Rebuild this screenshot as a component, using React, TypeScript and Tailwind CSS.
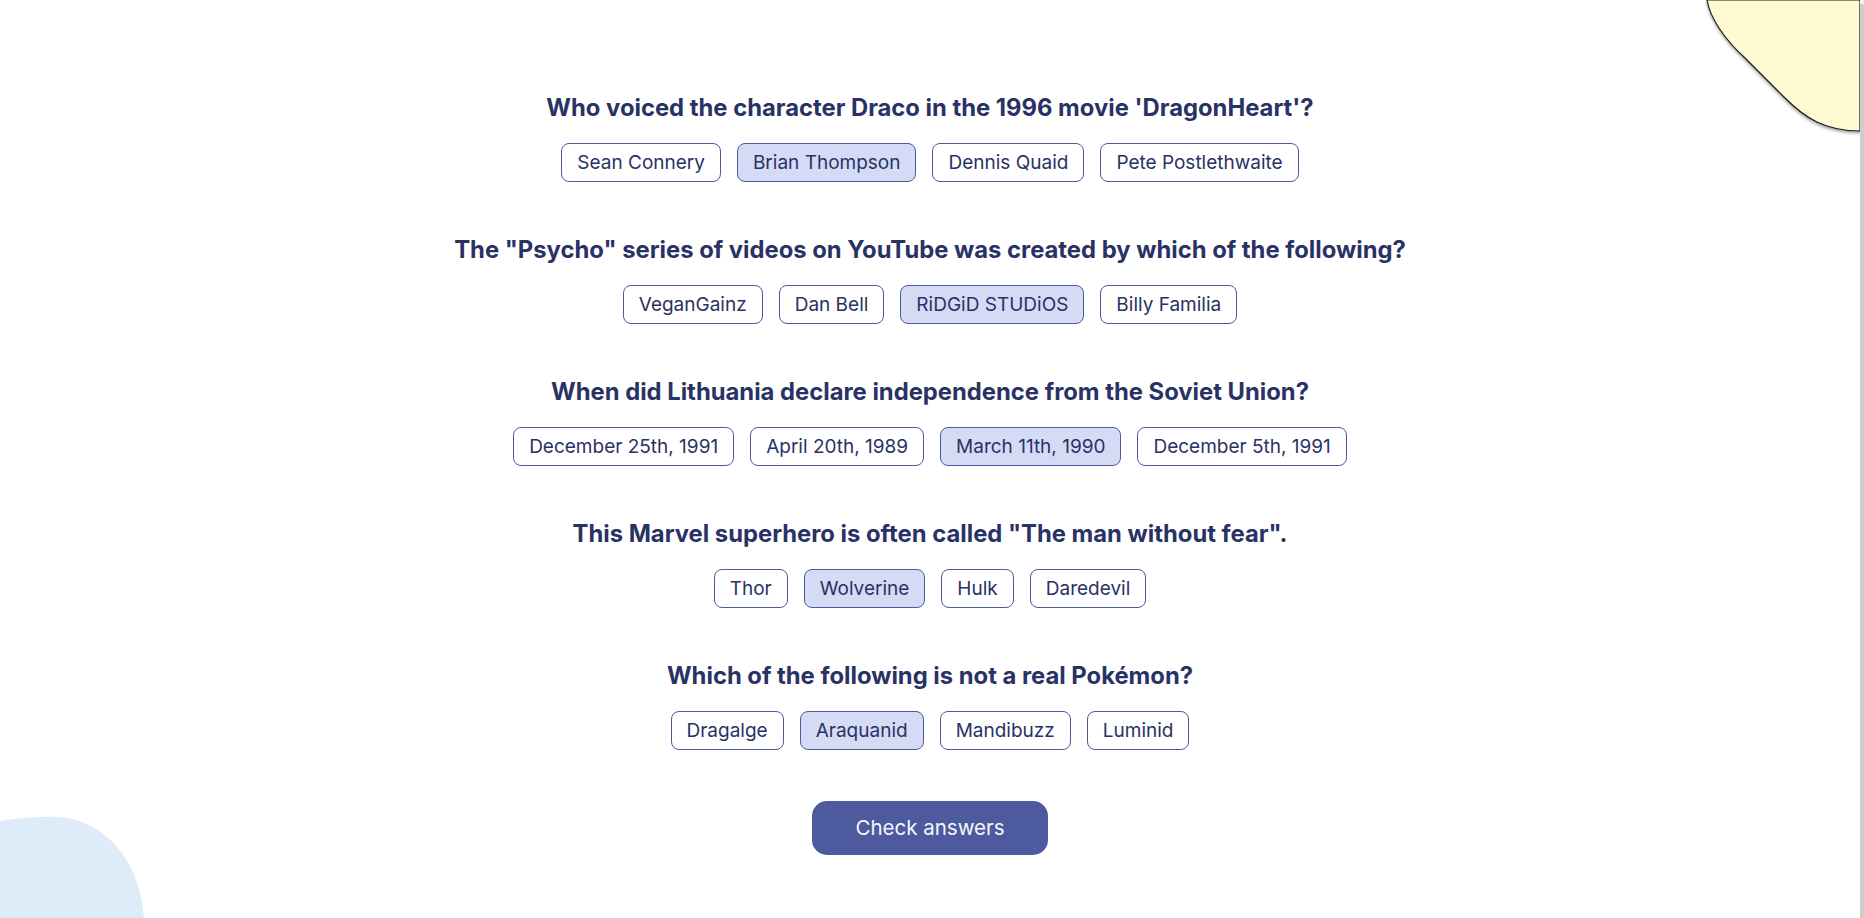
const questions = [
  {
    question: "Who voiced the character Draco in the 1996 movie 'DragonHeart'?",
    answers: ["Sean Connery", "Brian Thompson", "Dennis Quaid", "Pete Postlethwaite"],
    selected: 1,
  },
  {
    question: 'The "Psycho" series of videos on YouTube was created by which of the following?',
    answers: ["VeganGainz", "Dan Bell", "RiDGiD STUDiOS", "Billy Familia"],
    selected: 2,
  },
  {
    question: "When did Lithuania declare independence from the Soviet Union?",
    answers: ["December 25th, 1991", "April 20th, 1989", "March 11th, 1990", "December 5th, 1991"],
    selected: 2,
  },
  {
    question: 'This Marvel superhero is often called "The man without fear".',
    answers: ["Thor", "Wolverine", "Hulk", "Daredevil"],
    selected: 1,
  },
  {
    question: "Which of the following is not a real Pokémon?",
    answers: ["Dragalge", "Araquanid", "Mandibuzz", "Luminid"],
    selected: 1,
  },
];

const App = () => {
  return (
    <div className="flex h-[918px] w-full overflow-hidden bg-white font-['Inter',sans-serif] text-[#293264]">
      <div className="relative flex-1">
        {/* top right blob */}
        <svg
          className="absolute right-0 top-0"
          width="160"
          height="140"
          viewBox="0 0 160 140"
        >
          <defs>
            <filter id="shade" x="-20%" y="-20%" width="140%" height="140%">
              <feDropShadow dx="0" dy="2" stdDeviation="1.5" floodColor="#000" floodOpacity="0.35" />
            </filter>
          </defs>
          <path
            d="M7 0 C 10 18, 25 40, 45 58 L 85 98 C 105 118, 125 131, 160 131 L 160 0 Z"
            fill="#FFFAD1"
            stroke="#1a1a1a"
            strokeWidth="1.2"
            filter="url(#shade)"
          />
        </svg>

        {/* bottom left blob */}
        <svg
          className="absolute bottom-0 left-0"
          width="150"
          height="102"
          viewBox="0 0 150 102"
        >
          <path
            d="M0 5 C 20 2, 40 0, 58 1 C 100 3, 140 40, 144 102 L 0 102 Z"
            fill="#DEEBF8"
          />
        </svg>

        <main className="relative flex flex-col items-center pt-[93px]">
          {questions.map((q, qi) => (
            <section key={qi} className="mb-[53px] flex flex-col items-center">
              <h2 className="text-[23.8px] font-bold leading-[29px]">{q.question}</h2>
              <div className="mt-[21px] flex gap-[16px]">
                {q.answers.map((a, ai) => (
                  <button
                    key={ai}
                    className={`rounded-[8px] border border-[#4D5B9E] px-[15px] py-[7px] text-[19px] leading-[23px] ${
                      ai === q.selected ? "bg-[#D6DBF5]" : "bg-white"
                    }`}
                  >
                    {a}
                  </button>
                ))}
              </div>
            </section>
          ))}
          <button className="-mt-[2px] h-[54px] w-[236px] rounded-[15px] bg-[#4D5B9E] text-[20.5px] text-[#F5F7FB]">
            Check answers
          </button>
        </main>
      </div>
      <div className="flex w-[4px] flex-col">
        <div className="h-[4px] bg-[#f1f1f1]" />
        <div className="flex-1 bg-[#cdcdcd]" />
      </div>
    </div>
  );
};

export default App;
